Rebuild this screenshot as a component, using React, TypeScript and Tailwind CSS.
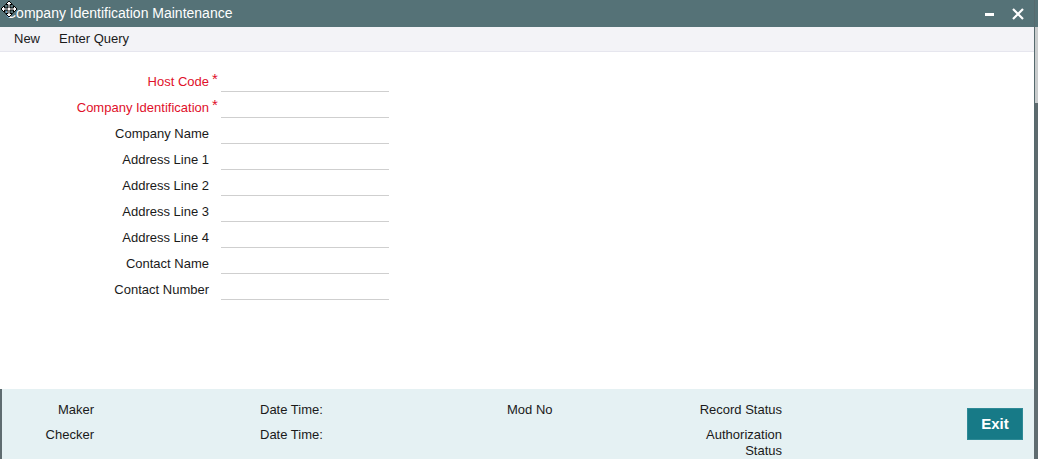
import React from 'react';

const font = { fontFamily: '"Liberation Sans", Arial, sans-serif' };

const fields: { label: string; required?: boolean }[] = [
  { label: 'Host Code', required: true },
  { label: 'Company Identification', required: true },
  { label: 'Company Name' },
  { label: 'Address Line 1' },
  { label: 'Address Line 2' },
  { label: 'Address Line 3' },
  { label: 'Address Line 4' },
  { label: 'Contact Name' },
  { label: 'Contact Number' },
];

function MoveCursor() {
  return (
    <svg className="absolute left-0 top-0" width="20" height="20" viewBox="0 0 20 20">
      <path
        d="M9 1 L5.5 4.5 H8 V8 H4.5 V5.5 L1 9 L4.5 12.5 V10 H8 V13.5 H5.5 L9 17 L12.5 13.5 H10 V10 H13.5 V12.5 L17 9 L13.5 5.5 V8 H10 V4.5 H12.5 Z"
        fill="#fff"
        stroke="#000"
        strokeWidth="1"
      />
    </svg>
  );
}

export default function App() {
  return (
    <div className="relative flex h-[459px] w-[1038px] flex-col overflow-hidden bg-white text-[13px] text-[#1a1a1a]" style={font}>
      <div className="flex">
        <div className="flex min-w-0 flex-1 flex-col">
          {/* title bar */}
          <div className="flex h-[27px] items-center justify-between bg-[#557277] pl-[6px] pr-[10px] text-white">
            <span className="text-[14px]">Company Identification Maintenance</span>
            <div className="flex items-center gap-[18px]">
              <span className="mt-[2px] block h-[3px] w-[9px] bg-white" />
              <svg width="12" height="12" viewBox="0 0 12 12">
                <path d="M1 1 L11 11 M11 1 L1 11" stroke="#fff" strokeWidth="2.2" />
              </svg>
            </div>
          </div>

          {/* menu bar */}
          <div className="flex h-[25px] items-center gap-[19px] border-b border-[#e6e6ee] bg-[#f3f3f7] pl-[14px]">
            <span>New</span>
            <span>Enter Query</span>
          </div>

          {/* form */}
          <div className="flex h-[337px] flex-col gap-[4px] pt-[18px]">
            {fields.map((f) => (
              <div key={f.label} className="flex h-[22px] items-end">
                <div className={`flex w-[221px] items-center justify-end self-center pr-[3px] pt-[1px] ${f.required ? 'text-[#e0102a]' : ''}`}>
                  <span>{f.label}</span>
                  <span className={`-mt-[6px] ml-[3px] w-[6px] text-[15px] leading-[14px] ${f.required ? '' : 'invisible'}`}>*</span>
                </div>
                <div className="h-[22px] w-[168px] border-b border-[#cfcfcf]" />
              </div>
            ))}
          </div>
        </div>

        {/* scroll strip */}
        <div className="flex w-[4px] flex-col border-l border-[#566a6e] bg-[#5d6a6e]">
          <div className="h-[27px] bg-[#557277]" />
          <div className="h-[76px] bg-[#c9cccd]" />
        </div>
      </div>

      {/* footer */}
      <div className="flex flex-1 border-l-2 border-r-4 border-[#5f6c70] bg-[#e5f1f3]">
        <div className="flex flex-1 pt-[13px] leading-[16px]">
          <div className="flex w-[92px] flex-col gap-[9px] text-right">
            <span>Maker</span>
            <span>Checker</span>
          </div>
          <div className="ml-[166px] flex w-[247px] flex-col gap-[9px]">
            <span>Date Time:</span>
            <span>Date Time:</span>
          </div>
          <div className="w-[120px]">
            <span>Mod No</span>
          </div>
          <div className="flex w-[155px] flex-col gap-[9px] text-right">
            <span>Record Status</span>
            <span>
              Authorization
              <br />
              Status
            </span>
          </div>
        </div>
        <div className="flex items-start pr-[11px] pt-[19px]">
          <button className="h-[32px] w-[56px] border border-[#2e8a96] bg-[#177a87] text-[15px] font-bold text-white">
            Exit
          </button>
        </div>
      </div>

      <MoveCursor />
    </div>
  );
}
